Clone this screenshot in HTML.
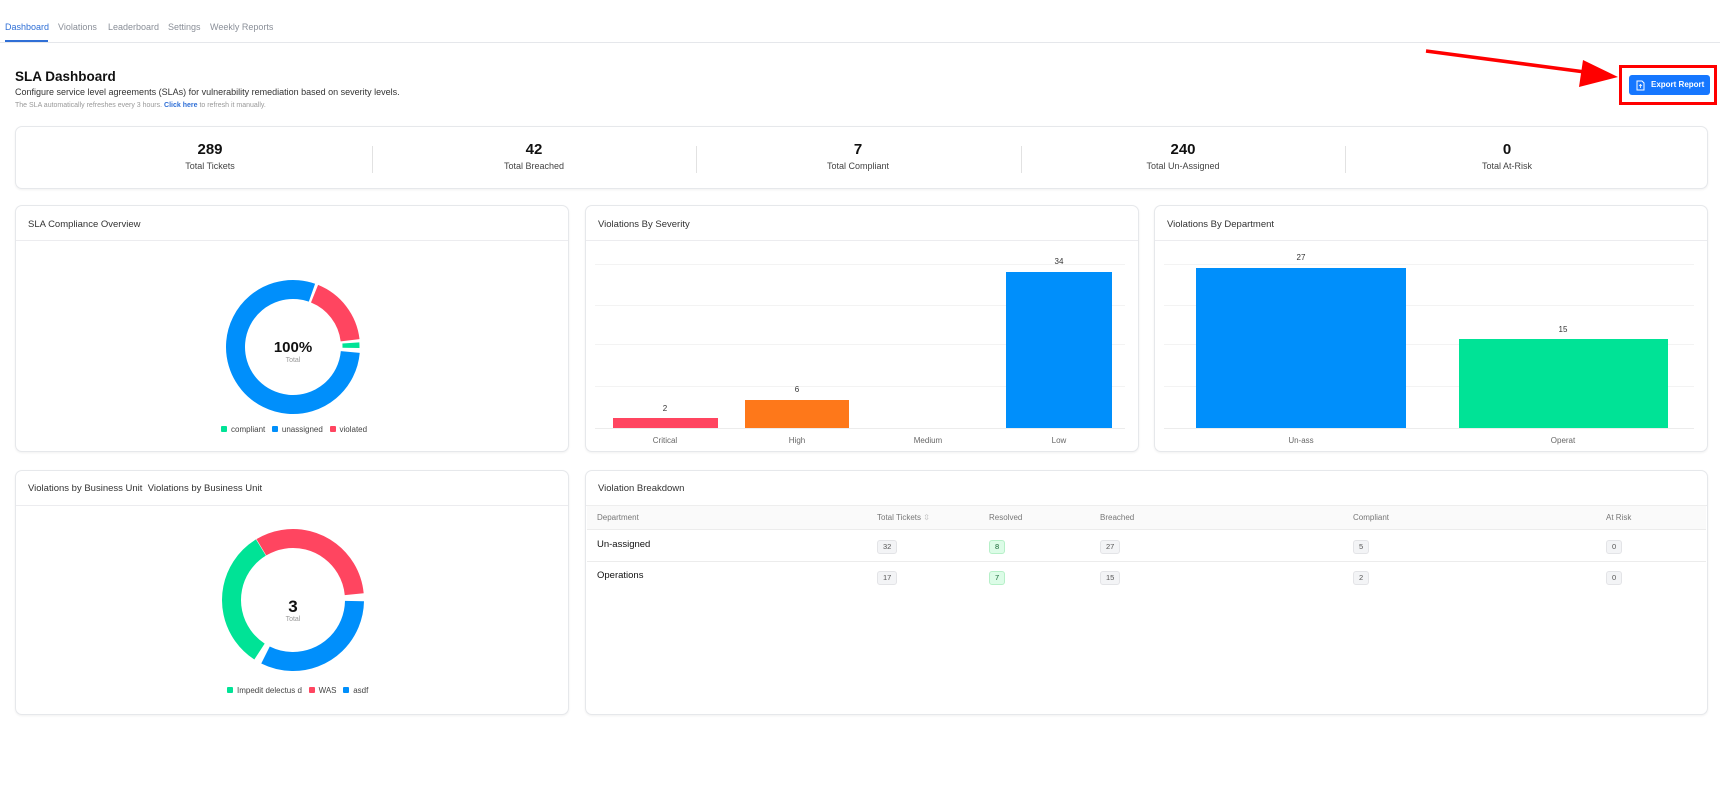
<!DOCTYPE html>
<html><head><meta charset="utf-8"><style>
*{box-sizing:border-box;margin:0;padding:0}
body{width:1726px;height:787px;background:#fff;font-family:"Liberation Sans",sans-serif;color:#222;position:relative;overflow:hidden}
.a{position:absolute}
.tab{position:absolute;top:22px;font-size:9px;color:#8a8f98}
.card{position:absolute;border:1px solid #e6e8eb;border-radius:7px;background:#fff;box-shadow:0 1px 2px rgba(0,0,0,.06)}
.ch{height:35px;border-bottom:1px solid #ececef;font-size:9.5px;padding:13px 12px;color:#333}
.sn{position:absolute;top:141px;width:324px;text-align:center}
.sn b{display:block;font-size:15px;font-weight:bold;color:#111}
.sn span{display:block;font-size:9px;color:#444;margin-top:3px}
.dv{position:absolute;top:146px;width:1px;height:27px;background:#e2e2e2}
.lbl{position:absolute;font-size:8px;color:#333;text-align:center;width:40px}
.cat{position:absolute;font-size:8px;color:#666;text-align:center;width:60px;top:436px}
.grid{position:absolute;height:1px;background:#f3f3f3}
.th{position:absolute;top:513px;font-size:8px;color:#777}
.td{position:absolute;font-size:9.5px;color:#111}
.bd{position:absolute;font-size:7.5px;color:#555;background:#f3f4f6;border:1px solid #e3e4e7;border-radius:3px;height:14px;line-height:12px;padding:0 5px}
.bd.g{background:#dcfce7;border-color:#b6f0c8;color:#166534}
.lg{position:absolute;font-size:8px;color:#444}
.lg i{display:inline-block;width:6px;height:6px;border-radius:1px;margin:0 4px 0 0;vertical-align:0}
</style></head><body>
<div class="tab" style="left:5px;color:#2f6fd6">Dashboard</div>
<div class="tab" style="left:58px">Violations</div>
<div class="tab" style="left:108px">Leaderboard</div>
<div class="tab" style="left:168px">Settings</div>
<div class="tab" style="left:210px">Weekly Reports</div>
<div class="a" style="left:0;top:42px;width:1720px;height:1px;background:#e5e7eb"></div>
<div class="a" style="left:5px;top:40px;width:43px;height:2px;background:#2f6fd6"></div>

<div class="a" style="left:15px;top:69px;font-size:13.5px;font-weight:bold;color:#111">SLA Dashboard</div>
<div class="a" style="left:15px;top:87px;font-size:9px;color:#333">Configure service level agreements (SLAs) for vulnerability remediation based on severity levels.</div>
<div class="a" style="left:15px;top:102px;font-size:7px;color:#999">The SLA automatically refreshes every 3 hours. <b style="color:#2f6fd6">Click here</b> to refresh it manually.</div>

<svg class="a" style="left:0;top:0" width="1726" height="120"><line x1="1426" y1="51" x2="1585" y2="72" stroke="#f00" stroke-width="3.5"/><polygon points="1618,77 1583,60 1579,87" fill="#f00"/></svg>
<div class="a" style="left:1619px;top:65px;width:98px;height:40px;border:3px solid #f00"></div>
<div class="a" style="left:1629px;top:75px;width:81px;height:20px;background:#1677ff;border-radius:3px;color:#fff;font-size:8px;font-weight:bold;line-height:20px;padding-left:22px">Export Report</div>
<svg class="a" style="left:1636px;top:80px" width="9" height="11"><path d="M1 1h5l2 2v7H1z" fill="none" stroke="#fff" stroke-width="1"/><path d="M4.5 8V4.5M3 6l1.5-1.5L6 6" fill="none" stroke="#fff" stroke-width=".8"/></svg>

<div class="card" style="left:15px;top:126px;width:1693px;height:63px"></div>
<div class="sn" style="left:48px"><b>289</b><span>Total Tickets</span></div>
<div class="sn" style="left:372px"><b>42</b><span>Total Breached</span></div>
<div class="sn" style="left:696px"><b>7</b><span>Total Compliant</span></div>
<div class="sn" style="left:1021px"><b>240</b><span>Total Un-Assigned</span></div>
<div class="sn" style="left:1345px"><b>0</b><span>Total At-Risk</span></div>
<div class="dv" style="left:372px"></div><div class="dv" style="left:696px"></div><div class="dv" style="left:1021px"></div><div class="dv" style="left:1345px"></div>

<div class="card" style="left:15px;top:205px;width:554px;height:247px"><div class="ch">SLA Compliance Overview</div></div>
<div class="card" style="left:585px;top:205px;width:554px;height:247px"><div class="ch">Violations By Severity</div></div>
<div class="card" style="left:1154px;top:205px;width:554px;height:247px"><div class="ch">Violations By Department</div></div>
<div class="card" style="left:15px;top:470px;width:554px;height:245px"><div class="ch" style="padding-top:12px">Violations by Business Unit &nbsp;Violations by Business Unit</div></div>
<div class="card" style="left:585px;top:470px;width:1123px;height:245px"><div class="ch" style="padding-top:12px">Violation Breakdown</div></div>

<svg class="a" style="left:0;top:0" width="600" height="787">
<g transform="translate(293,347) rotate(-90)" fill="none" stroke-width="19">
<circle r="57.5" stroke="#ff4560" stroke-dasharray="61.4 400" transform="rotate(22)"/>
<circle r="58" stroke="#00e396" stroke-width="17" stroke-dasharray="5 400" transform="rotate(86)"/>
<circle r="57.5" stroke="#008ffb" stroke-dasharray="285 400" transform="rotate(95)"/>
</g>
<text x="293" y="352" text-anchor="middle" font-size="15" font-weight="bold" fill="#111" font-family="Liberation Sans">100%</text>
<text x="293" y="362" text-anchor="middle" font-size="7" fill="#999" font-family="Liberation Sans">Total</text>
<g transform="translate(293,600) rotate(-90)" fill="none" stroke-width="19">
<circle r="61.5" stroke="#ff4560" stroke-dasharray="124 400" transform="rotate(-31)"/>
<circle r="61.5" stroke="#008ffb" stroke-dasharray="124 400" transform="rotate(91)"/>
<circle r="61.5" stroke="#00e396" stroke-dasharray="124 400" transform="rotate(213)"/>
</g>
<text x="293" y="612" text-anchor="middle" font-size="17" font-weight="bold" fill="#111" font-family="Liberation Sans">3</text>
<text x="293" y="621" text-anchor="middle" font-size="7" fill="#999" font-family="Liberation Sans">Total</text>
</svg>
<div class="lg" style="left:221px;top:425px"><i style="background:#00e396"></i>compliant &nbsp;&nbsp;<i style="background:#008ffb"></i>unassigned &nbsp;&nbsp;<i style="background:#ff4560"></i>violated</div>

<div class="grid" style="left:595px;top:264px;width:530px"></div><div class="grid" style="left:595px;top:305px;width:530px"></div><div class="grid" style="left:595px;top:344px;width:530px"></div><div class="grid" style="left:595px;top:386px;width:530px"></div><div class="grid" style="left:595px;top:428px;width:530px;background:#ececec"></div>
<div class="a" style="left:613px;top:418px;width:105px;height:10px;background:#ff4560"></div>
<div class="a" style="left:745px;top:400px;width:104px;height:28px;background:#fe781a"></div>
<div class="a" style="left:1006px;top:272px;width:106px;height:156px;background:#008ffb"></div>
<div class="lbl" style="left:645px;top:404px">2</div><div class="lbl" style="left:777px;top:385px">6</div><div class="lbl" style="left:1039px;top:257px">34</div>
<div class="cat" style="left:635px">Critical</div><div class="cat" style="left:767px">High</div><div class="cat" style="left:898px">Medium</div><div class="cat" style="left:1029px">Low</div>

<div class="grid" style="left:1164px;top:264px;width:530px"></div><div class="grid" style="left:1164px;top:305px;width:530px"></div><div class="grid" style="left:1164px;top:344px;width:530px"></div><div class="grid" style="left:1164px;top:386px;width:530px"></div><div class="grid" style="left:1164px;top:428px;width:530px;background:#ececec"></div>
<div class="a" style="left:1196px;top:268px;width:210px;height:160px;background:#008ffb"></div>
<div class="a" style="left:1459px;top:339px;width:209px;height:89px;background:#00e396"></div>
<div class="lbl" style="left:1281px;top:253px">27</div><div class="lbl" style="left:1543px;top:325px">15</div>
<div class="cat" style="left:1271px">Un-ass</div><div class="cat" style="left:1533px">Operat</div>

<div class="lg" style="left:227px;top:686px"><i style="background:#00e396"></i>Impedit delectus d &nbsp;&nbsp;<i style="background:#ff4560"></i>WAS &nbsp;&nbsp;<i style="background:#008ffb"></i>asdf</div>

<div class="a" style="left:587px;top:505px;width:1119px;height:25px;background:#fafafa;border-bottom:1px solid #ececec;border-top:1px solid #eee"></div>
<div class="a" style="left:587px;top:561px;width:1119px;height:1px;background:#ececec"></div>
<div class="th" style="left:597px">Department</div><div class="th" style="left:877px">Total Tickets <span style="color:#bbb">⇳</span></div><div class="th" style="left:989px">Resolved</div><div class="th" style="left:1100px">Breached</div><div class="th" style="left:1353px">Compliant</div><div class="th" style="left:1606px">At Risk</div>
<div class="td" style="left:597px;top:539px">Un-assigned</div><div class="td" style="left:597px;top:570px">Operations</div>
<div class="bd" style="left:877px;top:540px">32</div><div class="bd g" style="left:989px;top:540px">8</div><div class="bd" style="left:1100px;top:540px">27</div><div class="bd" style="left:1353px;top:540px">5</div><div class="bd" style="left:1606px;top:540px">0</div>
<div class="bd" style="left:877px;top:571px">17</div><div class="bd g" style="left:989px;top:571px">7</div><div class="bd" style="left:1100px;top:571px">15</div><div class="bd" style="left:1353px;top:571px">2</div><div class="bd" style="left:1606px;top:571px">0</div>
</body></html>
